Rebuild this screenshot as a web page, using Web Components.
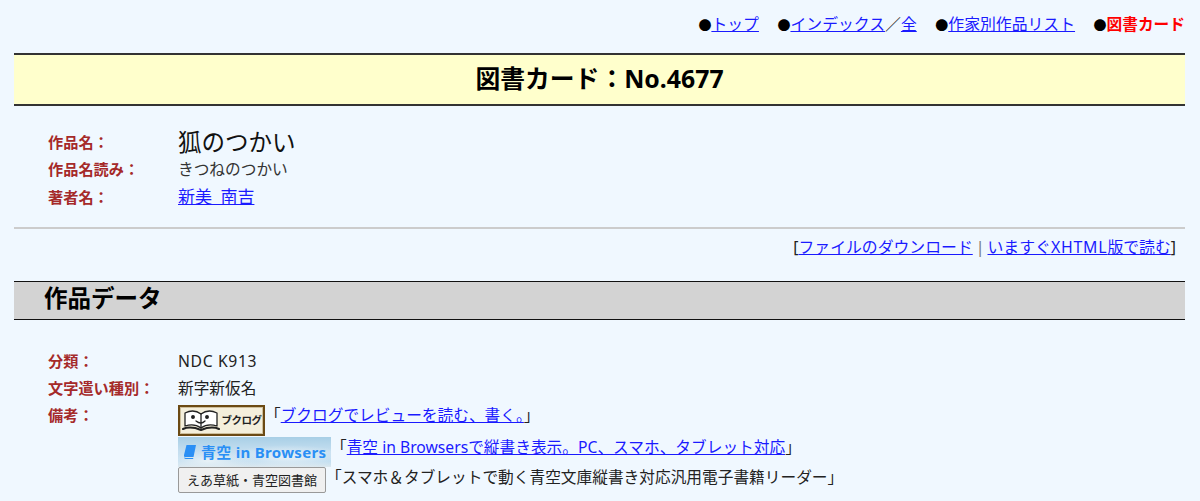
<!DOCTYPE html>
<html lang="ja"><head><meta charset="utf-8">
<style>
html,body{margin:0;padding:0;height:501px;overflow:hidden;background:#f0f8ff}
body{padding:0 15px 0 14px;font:15.7px/1.5 "Noto Sans","Noto Sans CJK JP",sans-serif;color:#222}
a{color:#1a1aff}
</style></head><body>
<top-nav></top-nav>
<title-bar>図書カード：No.4677</title-bar>
<info-table style="--pad:20px 0 0 34px">
  <info-row label="作品名：" h="32"><span style="font-size:23.5px;color:#111;line-height:32px;display:block">狐のつかい</span></info-row>
  <info-row label="作品名読み：" h="22"><span style="color:#333;line-height:22px;display:block">きつねのつかい</span></info-row>
  <info-row label="著者名：" h="34"><a href="#" style="color:#1a1aff;font-size:17px;word-spacing:4px;line-height:34px;display:inline-block">新美 南吉</a></info-row>
</info-table>
<action-links></action-links>
<section-head>作品データ</section-head>
<info-table style="--pad:28px 0 0 34px">
  <info-row label="分類：" h="27"><span style="letter-spacing:.65px">NDC K913</span></info-row>
  <info-row label="文字遣い種別：" h="27">新字新仮名</info-row>
  <info-row label="備考："><note-list></note-list></info-row>
</info-table>
<script>
const def=(name,html,init)=>customElements.define(name,class extends HTMLElement{
  constructor(){super();this.attachShadow({mode:'open'}).innerHTML=html;}
  connectedCallback(){init&&init(this)}
});
def('top-nav',`<style>
:host{display:flex;justify-content:flex-end;height:53px;padding-top:12px;box-sizing:border-box;font-size:15.85px;line-height:24px;white-space:nowrap}
a{color:#1a1aff}span{margin-left:18.5px;color:#222}b{color:#f00;font-weight:700;font-size:15.7px}i{font-style:normal;color:#000;font-size:13px}
</style>
<span><i>●</i><a href="#">トップ</a></span><span><i>●</i><a href="#">インデックス</a>／<a href="#">全</a></span><span><i>●</i><a href="#">作家別作品リスト</a></span><span><i>●</i><b>図書カード</b></span>`);
def('title-bar',`<style>
:host{display:block;height:53px;box-sizing:border-box;border-top:2px solid #333;border-bottom:2px solid #333;background:#ffc;text-align:center;font-size:24.8px;font-weight:700;line-height:46px;color:#000}
</style><slot></slot>`);
def('info-table',`<style>:host{display:block;padding:var(--pad)}</style><slot></slot>`);
def('info-row',`<style>
:host{display:grid;grid-template-columns:130px 1fr;align-items:center}
.l{color:#a52a2a;font-weight:700;font-size:15.2px}
</style><div class="l"></div><div><slot></slot></div>`,el=>{
  el.shadowRoot.querySelector('.l').textContent=el.getAttribute('label');
  if(el.getAttribute('h'))el.style.height=el.getAttribute('h')+'px';
  else{el.style.alignItems='start';el.shadowRoot.querySelector('.l').style.lineHeight='26px'}
});
def('action-links',`<style>
:host{display:block;margin-top:13px;border-top:2px solid #ccc;height:54px;box-sizing:border-box;text-align:right;padding:6px 9px 0 0;font-size:15.85px;line-height:24px;white-space:nowrap}
a{color:#1a1aff}i{font-style:normal;color:#777;margin:0 3px}u{text-decoration:none;letter-spacing:.8px}
</style>[<a href="#">ファイルのダウンロード</a><i>|</i><a href="#">いますぐ<u>XHTML</u>版で読む</a>]`);
def('section-head',`<style>
:host{display:block;height:39px;box-sizing:border-box;border-top:1.5px solid #111;border-bottom:1.5px solid #111;background:#d3d3d3;padding-left:30px;font-size:23.5px;font-weight:700;line-height:33px;color:#000}
</style><slot></slot>`);
def('note-list',`<style>
:host{display:block;white-space:nowrap;padding-top:3px}
.r{display:flex;align-items:flex-start;line-height:20px}
a{color:#1a1aff}
.book{width:87px;height:31px;box-sizing:border-box;border:2px solid #6b4a14;outline:1px solid #cdbf9c;outline-offset:-3px;background:#f4efdc;display:flex;align-items:center;justify-content:center;gap:2px}
.book span{font:700 10.5px/1 "Noto Sans CJK JP",sans-serif;color:#222;letter-spacing:-.5px}
.sky{width:153px;height:30px;box-sizing:border-box;background:radial-gradient(ellipse 60px 12px at 110px 20px,#e6f0f6 0%,transparent 100%),radial-gradient(ellipse 50px 10px at 30px 24px,#e8f1f6 0%,transparent 100%),linear-gradient(180deg,#a8cfe6 0%,#c6dff0 50%,#b9daf0 80%,#dde8ee 100%);display:flex;align-items:center;padding-left:5px;gap:4px;color:#2a8ff5;font:700 15px/1 "Noto Sans","Noto Sans CJK JP",sans-serif;letter-spacing:.3px}
.btn{width:148px;height:26px;box-sizing:border-box;border:1px solid #999;border-radius:2px;background:#f0f0f0;color:#222;font-size:13px;line-height:24px;text-align:center}
</style>
<div class="r" style="height:32px"><div class="book">
<svg width="38" height="23" viewBox="0 0 38 23" fill="none" stroke="#222" stroke-width="1.3" stroke-linejoin="round" stroke-linecap="round"><path d="M3 4C9 1 15 2 19 5C23 2 29 1 35 4V17C29 15 23 16 19 19C15 16 9 15 3 17Z" fill="#fff"/><path d="M19 5V19"/><path d="M1 20C8 17 14 19 19 21C24 19 30 17 37 20" stroke-width="2"/><circle cx="11" cy="8" r="1.3" fill="#222"/><circle cx="25" cy="8" r="1.3" fill="#222"/><path d="M14 12Q19 16 23 12"/></svg>
<span>ブクログ</span></div><span>「<a href="#">ブクログでレビューを読む、書く。</a>」</span></div>
<div class="r" style="height:30px"><div class="sky">
<svg width="14" height="16" viewBox="0 0 14 16"><path d="M3.5 1H13L10.5 13H2Q.5 13 1 11Z" fill="#2a8ff5"/><path d="M1 13.5Q1.5 15 3 15H10L10.4 14H3Z" fill="#2a8ff5"/></svg>
<span>青空 in Browsers</span></div><span>「<a href="#">青空 in Browsersで縦書き表示。PC、スマホ、タブレット対応</a>」</span></div>
<div class="r" style="height:26px"><div class="btn">えあ草紙・青空図書館</div><span>「スマホ＆タブレットで動く青空文庫縦書き対応汎用電子書籍リーダー」</span></div>`);
</script>
</body></html>
